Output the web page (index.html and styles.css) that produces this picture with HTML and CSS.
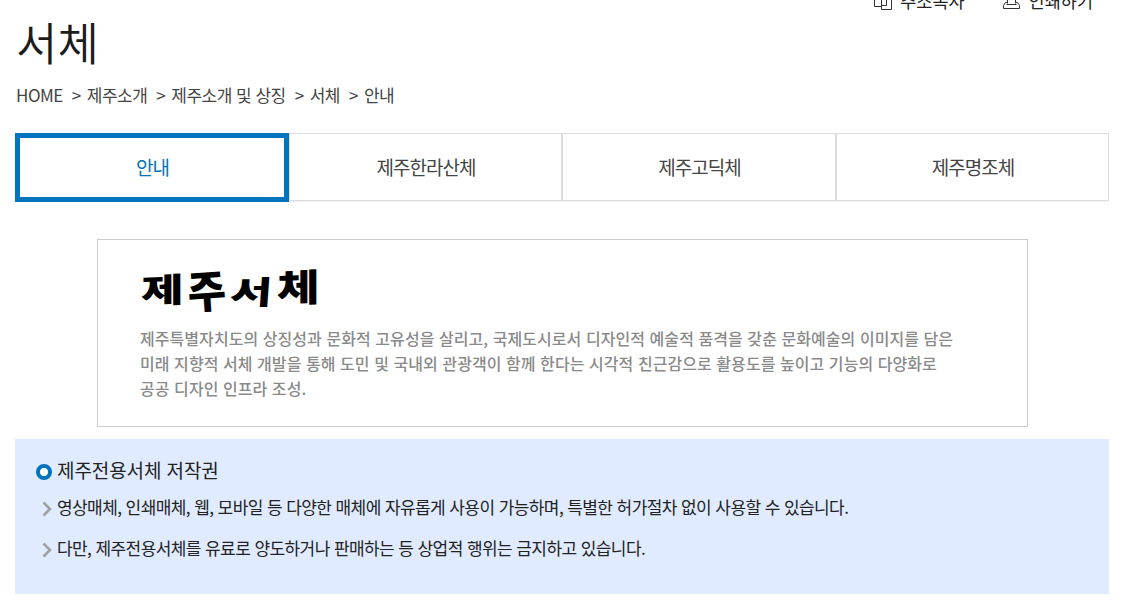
FILE: index.html
```html
<!DOCTYPE html>
<html lang="ko">
<head>
    <meta charset="UTF-8">
    <title>서체</title>
    <link rel="stylesheet" href="styles.css">
</head>
<body>
<div class="wrap">
    <ul class="util">
        <li>
            <svg width="18" height="18" viewBox="0 0 18 18"><path d="M7.5 14.5h-7v-13h12v4M7.5 5.5h10v12h-10zM12.5 5.5v8h-5"/></svg>
            <a>주소복사</a>
        </li>
        <li>
            <svg width="18" height="18" viewBox="0 0 18 18"><path d="M4.5 11.5v-10h8v10M4.5 10.5h-2l-2 3v3h16v-3l-2-3h-2M3.5 12.5h10"/></svg>
            <a>인쇄하기</a>
        </li>
    </ul>
    <h1>서체</h1>
    <ul class="location">
        <li>HOME</li>
        <li>제주소개</li>
        <li>제주소개 및 상징</li>
        <li>서체</li>
        <li>안내</li>
    </ul>
    <ul class="tab">
        <li class="on"><a>안내</a></li>
        <li><a>제주한라산체</a></li>
        <li><a>제주고딕체</a></li>
        <li><a>제주명조체</a></li>
    </ul>
    <div class="banner">
        <h2><span class="c1">제</span><span class="c2">주</span><span class="c3">서</span><span class="c4">체</span></h2>
        <p>제주특별자치도의 상징성과 문화적 고유성을 살리고, 국제도시로서 디자인적 예술적 품격을 갖춘 문화예술의 이미지를 담은</p>
        <p>미래 지향적 서체 개발을 통해 도민 및 국내외 관광객이 함께 한다는 시각적 친근감으로 활용도를 높이고 기능의 다양화로</p>
        <p>공공 디자인 인프라 조성.</p>
    </div>
    <div class="copy">
        <h3>제주전용서체 저작권</h3>
        <ul>
            <li><svg width="10" height="16" viewBox="0 0 10 16"><path d="M1.5 1.5l6.5 6.5l-6.5 6.5"/></svg>영상매체, 인쇄매체, 웹, 모바일 등 다양한 매체에 자유롭게 사용이 가능하며, 특별한 허가절차 없이 사용할 수 있습니다.</li>
            <li><svg width="10" height="16" viewBox="0 0 10 16"><path d="M1.5 1.5l6.5 6.5l-6.5 6.5"/></svg>다만, 제주전용서체를 유료로 양도하거나 판매하는 등 상업적 행위는 금지하고 있습니다.</li>
        </ul>
    </div>
</div>
</body>
</html>
```
FILE: styles.css
```css
* {
    margin: 0;
    padding: 0;
    list-style: none;
    box-sizing: border-box;
}

body {
    overflow: hidden;
    background: #fff;
    color: #222;
    font-family: "Noto Sans CJK KR", sans-serif;
    white-space: nowrap;
}

.wrap {
    width: 1094px;
    margin-left: 15px;
}

.util {
    display: flex;
    justify-content: flex-end;
    gap: 38px;
    height: 24px;
    margin-top: -11px;
    padding-right: 16px;
    font-size: 17.5px;
    line-height: 24px;
}

.util li {
    display: flex;
    gap: 8px;
}

.util svg {
    margin-top: 3px;
    fill: none;
    stroke: #333;
}

h1 {
    height: 66px;
    margin-top: -4px;
    padding-left: 1px;
    font-size: 45px;
    font-weight: 350;
    line-height: 65px;
    color: #1c1c1c;
}

.location {
    display: flex;
    height: 24px;
    margin-top: 8px;
    padding-left: 1px;
    font-size: 17px;
    line-height: 24px;
    letter-spacing: -0.5px;
    color: #444;
}

.location li + li::before {
    content: ">";
    margin: 0 6px 0 9px;
}

.tab {
    display: grid;
    grid-template-columns: 274px 273px 274px 273px;
    height: 69px;
    margin-top: 26px;
}

.tab li {
    height: 68px;
    border: 1px solid #ddd;
    padding-left: 1px;
    box-shadow: 0 1px 0 #f0f0f0;
    font-size: 19px;
    line-height: 66px;
    letter-spacing: -1px;
    text-align: center;
    color: #444;
}

.tab li.on {
    height: 69px;
    border: 5px solid #0075bd;
    box-shadow: none;
    line-height: 58px;
    color: #0075bd;
}

.banner {
    width: 931px;
    height: 188px;
    margin: 37px 0 0 82px;
    padding: 23px 0 0 42px;
    border: 1px solid #ccc;
    color: #8a8a8a;
}

.banner h2 {
    display: flex;
    height: 63px;
    font-size: 40px;
    font-weight: 900;
    line-height: 50px;
    color: #000;
}

/* brush style lettering */
.banner h2 span {
    width: 45px;
    transform-origin: 0 50%;
}

.banner h2 .c1 {
    transform: translate(1px, 0) skewY(-2deg) scale(1.16, .84);
}

.banner h2 .c2 {
    transform: translate(3px, 3px) rotate(-4deg) scale(1.04, 1.1);
}

.banner h2 .c3 {
    transform: translate(0, 1px) skewX(-4deg) scale(1.14, .8);
}

.banner h2 .c4 {
    transform: translate(2px, -2px) skewY(-2deg) scale(1.16, .94);
}

.banner p {
    height: 25px;
    font-size: 16px;
    font-weight: 500;
    line-height: 24px;
    letter-spacing: 0.06px;
}

.copy {
    height: 155px;
    margin-top: 12px;
    padding: 17px 0 0 21px;
    background: #e0ebff;
}

.copy h3 {
    display: flex;
    align-items: center;
    height: 28px;
    font-size: 19px;
    font-weight: 400;
    line-height: 26px;
    letter-spacing: -0.1px;
}

.copy h3::before {
    content: "";
    width: 8px;
    height: 8px;
    margin: 4px 5px 0 0;
    border: 4px solid #0075bd;
    border-radius: 50%;
    background: #fff;
}

.copy ul {
    margin-top: 2px;
}

.copy li {
    display: flex;
    align-items: center;
    height: 41px;
    padding-left: 5px;
    font-size: 17px;
    letter-spacing: -0.58px;
}

.copy svg {
    margin: 4px 5px 0 1px;
    fill: none;
    stroke: #a0a0a0;
    stroke-width: 2.5;
}
```
